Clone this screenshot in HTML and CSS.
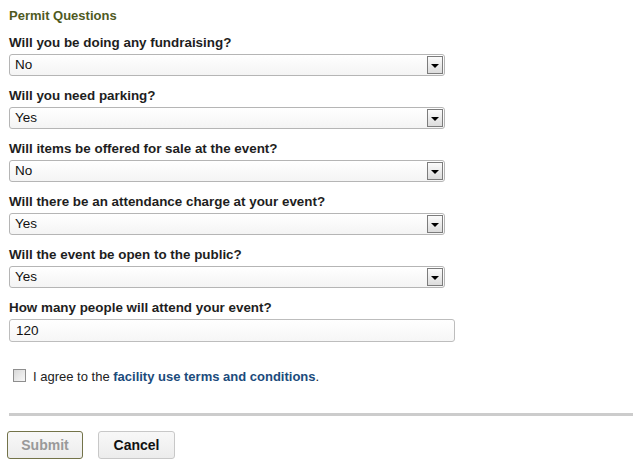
FILE: index.html
```html
<!DOCTYPE html>
<html>
<head>
<meta charset="utf-8">
<link rel="stylesheet" href="styles.css">
</head>
<body>
<div class="page">
  <h2 class="heading">Permit Questions</h2>
  <div class="fields">
    <div class="field">
      <div class="label">Will you be doing any fundraising?</div>
      <div class="select"><span class="value">No</span><span class="btn"><span class="tri"></span></span></div>
    </div>
    <div class="field">
      <div class="label">Will you need parking?</div>
      <div class="select"><span class="value">Yes</span><span class="btn"><span class="tri"></span></span></div>
    </div>
    <div class="field">
      <div class="label">Will items be offered for sale at the event?</div>
      <div class="select"><span class="value">No</span><span class="btn"><span class="tri"></span></span></div>
    </div>
    <div class="field">
      <div class="label">Will there be an attendance charge at your event?</div>
      <div class="select"><span class="value">Yes</span><span class="btn"><span class="tri"></span></span></div>
    </div>
    <div class="field">
      <div class="label">Will the event be open to the public?</div>
      <div class="select"><span class="value">Yes</span><span class="btn"><span class="tri"></span></span></div>
    </div>
    <div class="field">
      <div class="label">How many people will attend your event?</div>
      <div class="text-input">120</div>
    </div>
  </div>
  <div class="agree">
    <span class="checkbox"></span>
    <span class="agree-text">I agree to the <a class="link">facility use terms and conditions</a>.</span>
  </div>
  <div class="rule"></div>
  <div class="actions">
    <button class="button submit">Submit</button>
    <button class="button cancel">Cancel</button>
  </div>
</div>
</body>
</html>
```
FILE: styles.css
```css
html, body {
  margin: 0;
  padding: 0;
  background: #ffffff;
}
body {
  font-family: "Liberation Sans", Arial, sans-serif;
  font-size: 13px;
  color: #1e1e1e;
}
.page {
  padding: 8px 0 0 9px;
  width: 624px;
}
.heading {
  margin: 0;
  font-size: 13px;
  line-height: 16px;
  font-weight: bold;
  color: #4f5a1f;
}
.fields {
  margin-top: 11px;
  display: flex;
  flex-direction: column;
  gap: 12px;
}
.field {
  display: flex;
  flex-direction: column;
  gap: 3px;
}
.label {
  font-weight: bold;
  font-size: 13.4px;
  line-height: 16px;
  color: #1e1e1e;
}
.select {
  width: 436px;
  height: 22px;
  box-sizing: border-box;
  border: 1px solid #b5b5b5;
  border-radius: 3px;
  background: linear-gradient(#ffffff, #f4f4f4);
  display: flex;
  align-items: center;
  padding: 0 1px 0 5px;
}
.value {
  flex: 1;
  font-size: 13.5px;
  line-height: 16px;
  color: #111;
  margin-top: -1px;
}
.btn {
  width: 16px;
  height: 18px;
  box-sizing: border-box;
  border: 1px solid #7c7c7c;
  background: linear-gradient(#fbfbfb, #dcdcdc);
  display: flex;
  align-items: center;
  justify-content: center;
}
.tri {
  width: 0;
  height: 0;
  border-left: 4px solid transparent;
  border-right: 4px solid transparent;
  border-top: 4px solid #000;
  margin-top: 1px;
}
.text-input {
  width: 446px;
  height: 23px;
  box-sizing: border-box;
  border: 1px solid #bdbdbd;
  border-radius: 3px;
  background: linear-gradient(#ffffff, #f6f6f6);
  padding: 0 6px;
  font-size: 13.5px;
  line-height: 21px;
  color: #111;
}
.agree {
  margin-top: 27px;
  display: flex;
  align-items: center;
  gap: 7px;
  padding-left: 4px;
  height: 16px;
}
.checkbox {
  width: 13px;
  height: 13px;
  box-sizing: border-box;
  border: 1px solid #8e8e8e;
  background: linear-gradient(135deg, #d8d8d8, #f8f8f8);
  margin-top: -3px;
}
.agree-text {
  line-height: 16px;
  color: #222;
}
.link {
  color: #1b4b7c;
  font-weight: bold;
  text-decoration: none;
}
.rule {
  margin-top: 28px;
  height: 3px;
  background: #cccccc;
  width: 624px;
}
.actions {
  margin-top: 15px;
  margin-left: -2px;
  display: flex;
  gap: 15px;
}
.button {
  font-family: "Liberation Sans", Arial, sans-serif;
  font-size: 14px;
  font-weight: bold;
  height: 28px;
  width: 76px;
  border-radius: 3px;
  padding: 0;
  background: linear-gradient(#f8f8f8, #ececec);
}
.submit {
  border: 1px solid #737349;
  color: #999999;
}
.cancel {
  border: 1px solid #c8c8c8;
  color: #111;
  width: 77px;
}
```
